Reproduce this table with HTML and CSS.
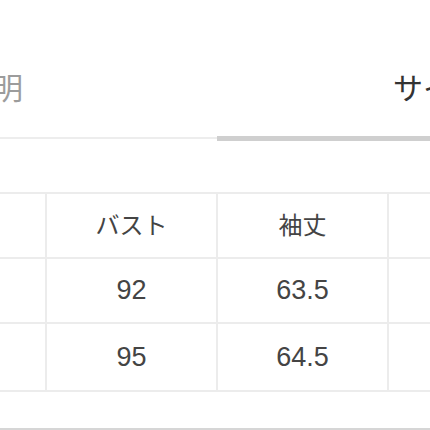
FILE: index.html
```html
<!DOCTYPE html>
<html lang="ja">
<head>
<meta charset="utf-8">
<link rel="stylesheet" href="styles.css">
</head>
<body>
<div class="tabs">
  <div class="tab tab-left">商品説明</div>
  <div class="tab tab-right">サイズ表</div>
</div>
<table class="size-table">
  <tr class="head"><td>サイズ</td><td>バスト</td><td>袖丈</td><td>着丈</td></tr>
  <tr><td>M</td><td class="num">92</td><td class="num">63.5</td><td class="num">70</td></tr>
  <tr class="last"><td>L</td><td class="num">95</td><td class="num">64.5</td><td class="num">72</td></tr>
</table>
<div class="footer-line"></div>
</body>
</html>
```
FILE: styles.css
```css
html, body {
  margin: 0;
  padding: 0;
  background: #fff;
  overflow: hidden;
}
body {
  width: 430px;
  height: 430px;
  font-family: "Liberation Sans", "Noto Sans CJK JP", sans-serif;
}
.tabs {
  display: flex;
  align-items: flex-start;
  height: 141px;
  margin-left: -291px;
  width: 1016px;
}
.tab {
  box-sizing: border-box;
  width: 508px;
  flex: none;
  font-size: 30px;
  line-height: 30px;
  padding-top: 74px;
  white-space: nowrap;
}
.tab-left {
  height: 139px;
  color: #9c9c9c;
  text-align: right;
  padding-right: 194px;
  border-bottom: 2px solid #ededed;
}
.tab-right {
  height: 141px;
  color: #333;
  text-align: left;
  padding-left: 176px;
  border-bottom: 5px solid #cfcfcf;
}
.size-table {
  margin-top: 51px;
  margin-left: -126px;
  border-collapse: collapse;
  table-layout: fixed;
  width: 684px;
}
.size-table td {
  width: 171px;
  height: 65px;
  box-sizing: border-box;
  border: 2px solid #ececec;
  text-align: center;
  vertical-align: middle;
  color: #444;
  font-size: 24px;
  padding: 0;
}
.size-table .head td {
  padding-bottom: 4px;
}
.size-table .last td {
  height: 68px;
}
.size-table td.num {
  font-size: 27px;
}
.footer-line {
  margin-top: 36px;
  height: 0;
  border-top: 2px solid #d6d6d6;
}
```
